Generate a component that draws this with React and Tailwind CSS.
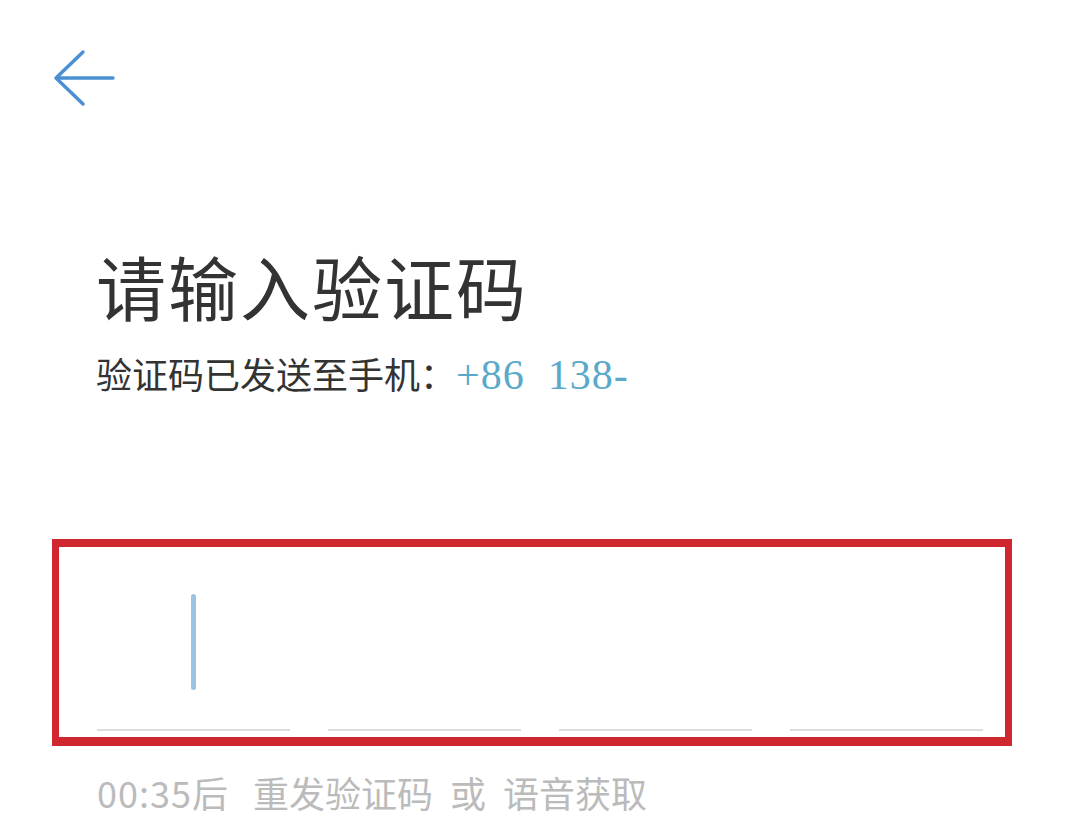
export default function App() {
  const cells = [0, 1, 2, 3];

  return (
    <div
      className="w-[1080px] h-[840px] bg-white overflow-hidden"
      style={{ fontFamily: '"Noto Sans CJK SC", "Noto Sans", sans-serif' }}
    >
      {/* back */}
      <div className="pt-[48px] pl-[53px]">
        <svg width="62" height="60" viewBox="0 0 62 60" fill="none">
          <path
            d="M30 4 L3 30 L30 56 M3 30 H60"
            stroke="#4b90d2"
            strokeWidth="3.5"
            strokeLinecap="round"
            strokeLinejoin="round"
          />
        </svg>
      </div>

      {/* heading */}
      <div className="pl-[96px] mt-[138px]">
        <h1 className="text-[70px] leading-[80px] text-[#333333] font-normal tracking-[2px]">
          请输入验证码
        </h1>
        <p className="mt-[25px] text-[36px] leading-[44px] text-[#333333] flex items-baseline">
          <span>验证码已发送至手机：</span>
          <span
            className="text-[#5aa9c9] text-[42px] tracking-[1px]"
            style={{ fontFamily: '"Liberation Serif", serif' }}
          >
            +86&nbsp;&nbsp;138-
          </span>
        </p>
      </div>

      {/* code input */}
      <div className="ml-[52px] mt-[142px] w-[960px] h-[207px] border-[7px] border-t-[8px] border-b-[9px] border-[#d0262f] pl-[38px] pr-[22px] flex flex-col">
        <div className="grid grid-cols-4 gap-[38px] flex-1">
          {cells.map((i) => (
            <div key={i} className="flex flex-col">
              <div className="flex-1 pt-[47px] pl-[94px]">
                {i === 0 && (
                  <div className="w-[5px] h-[96px] rounded-full bg-[#9dc3e2]" />
                )}
              </div>
              <div className="h-[2px] bg-[#dddddd] mb-[6px]" />
            </div>
          ))}
        </div>
      </div>

      {/* resend */}
      <p className="pl-[97px] mt-[24px] text-[36px] leading-[44px] text-[#bbbbbb] flex items-baseline">
        <span className="tracking-[1px]">00:35后</span>
        <span className="ml-[24px]">重发验证码</span>
        <span className="ml-[17px]">或</span>
        <span className="ml-[17px]">语音获取</span>
      </p>
    </div>
  );
}
